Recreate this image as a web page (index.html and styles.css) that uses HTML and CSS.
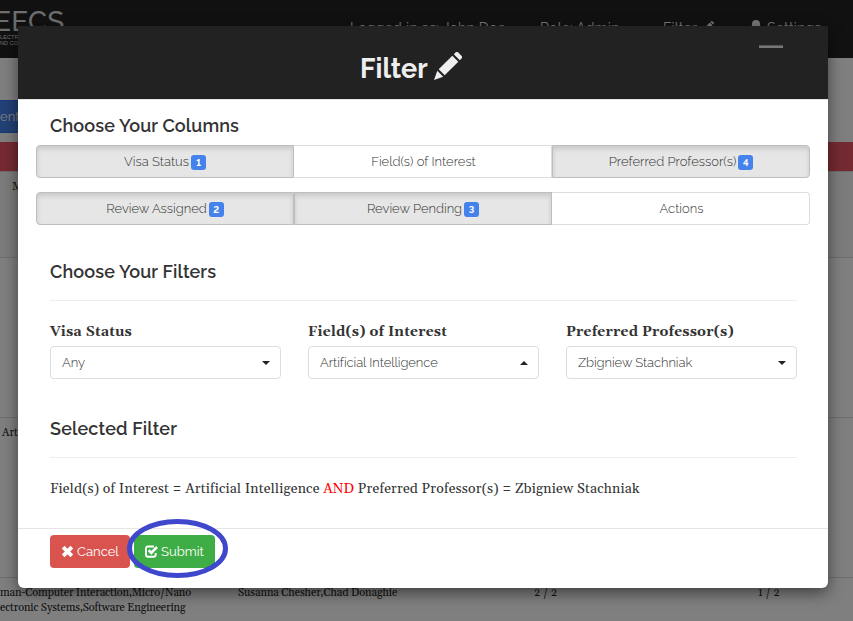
FILE: index.html
```html
<!DOCTYPE html>
<html lang="en">
<head>
<meta charset="utf-8">
<title>Filter</title>
<link rel="stylesheet" href="styles.css">
</head>
<body>
<svg class="defs" aria-hidden="true">
  <symbol id="pencil" viewBox="0 0 28 28"><path d="M0 28 3.3 18.8 9.2 24.7ZM4.7 17.3 18.3 3.7 24.3 9.7 10.7 23.3ZM19.8 2.2 22 0Q23 -.6 24 .3L27.7 4Q28.6 5 28 6L25.8 8.2Z"/></symbol>
</svg>
<div class="page">
  <nav class="navbar">
    <div class="logo"><span class="logo-name">EECS</span><span class="logo-sub">LECTRICAL ENGINEERING<br>ND COMPUTER SCIENCE</span></div>
    <span class="nav-item nav-user">Logged in as: John Doe</span>
    <span class="nav-item nav-role">Role: Admin</span>
    <span class="nav-item nav-filter">Filter <svg class="nav-pencil"><use href="#pencil"/></svg></span>
    <span class="nav-item nav-settings"><svg class="nav-dot" viewBox="0 0 10 14"><circle cx="5" cy="4" r="4"/><path d="M1 4H9L10 14H0Z"/></svg>Settings</span>
  </nav>
  <div class="toolbar"><span class="tool">ent</span></div>
  <div class="table-head"></div>
  <div class="row row-first"><span class="cell-m">Machine</span></div>
  <div class="row row-mid"></div>
  <div class="row row-mid"><span class="cell-a">Artificial</span></div>
  <div class="row row-last"><span class="c1">man-Computer Interaction,Micro/Nano<br>ectronic Systems,Software Engineering</span><span class="c2">Susanna Chesher,Chad Donaghie</span><span class="c3">2 / 2</span><span class="c4">1 / 2</span></div>
</div>
<div class="backdrop"></div>
<section class="modal">
  <header class="modal-header"><h1>Filter</h1><svg class="title-pencil"><use href="#pencil"/></svg><i class="minimize"></i></header>
  <main class="modal-body">
    <h2>Choose Your Columns</h2>
    <div class="group">
      <button class="active"><span>Visa Status</span><b>1</b></button><button><span>Field(s) of Interest</span></button><button class="active"><span>Preferred Professor(s)</span><b>4</b></button>
    </div>
    <div class="group">
      <button class="active"><span>Review Assigned</span><b>2</b></button><button class="active"><span>Review Pending</span><b>3</b></button><button><span>Actions</span></button>
    </div>
    <h2 class="filters-title">Choose Your Filters</h2>
    <hr>
    <div class="fields">
      <div class="field"><label>Visa Status</label><div class="select"><span>Any</span><i class="caret"></i></div></div>
      <div class="field"><label>Field(s) of Interest</label><div class="select"><span>Artificial Intelligence</span><i class="caret up"></i></div></div>
      <div class="field"><label>Preferred Professor(s)</label><div class="select"><span>Zbigniew Stachniak</span><i class="caret"></i></div></div>
    </div>
    <h2 class="selected-title">Selected Filter</h2>
    <hr>
    <p class="summary">Field(s) of Interest = Artificial Intelligence <em>AND</em> Preferred Professor(s) = Zbigniew Stachniak</p>
  </main>
  <footer class="modal-footer">
    <button class="cancel"><svg viewBox="0 0 12 12"><path d="M2 2 10 10M10 2 2 10" fill="none" stroke="#fff" stroke-width="3.6"/></svg><span>Cancel</span></button>
    <button class="submit"><svg viewBox="0 0 13 13"><path d="M9 1.5H3Q1 1.5 1 3.5V9.5Q1 11.8 3 11.8H8.5Q10.7 11.8 10.7 9.5V8" fill="none" stroke="#fff" stroke-width="1.9"/><path d="M3.7 5.3 6.3 7.8 12 2" fill="none" stroke="#fff" stroke-width="2.6"/></svg><span>Submit</span></button>
    <svg class="ring" viewBox="0 0 102 60"><ellipse cx="50.5" cy="29.5" rx="48" ry="27"/></svg>
  </footer>
</section>
</body>
</html>
```
FILE: styles.css
```css
* { box-sizing: border-box; }
body { margin: 0; width: 853px; height: 621px; overflow: hidden; position: relative; background: #fff; color: #333; font-family: Raleway, Lato, sans-serif; }
.defs { position: absolute; width: 0; height: 0; }
.page { height: 621px; overflow: hidden; font: 11px/15px Georgia, Gelasio, "Liberation Serif", serif; }
.navbar { height: 58px; background: #222; color: #eee; display: flex; font: 14px/20px Raleway, Lato, sans-serif; }
.logo { width: 350px; padding-top: 10px; }
.logo-name { display: block; margin-left: -6px; height: 24px; font: 500 28px/24px Raleway, Lato, sans-serif; letter-spacing: .2px; color: #ddd; }
.logo-sub { display: block; font: 5.5px/6px "Liberation Sans", sans-serif; letter-spacing: .1px; color: #ddd; }
.nav-item { padding-top: 18px; white-space: nowrap; }
.nav-user { width: 190px; letter-spacing: .25px; }
.nav-role { width: 123px; letter-spacing: .2px; }
.nav-filter { width: 88px; letter-spacing: .2px; }
.nav-pencil { width: 12px; height: 12px; fill: #eee; margin-left: 2px; }
.nav-settings { letter-spacing: .2px; }
.nav-dot { width: 10px; height: 14px; fill: #eee; margin-right: 6px; vertical-align: -1px; }
.toolbar { height: 84px; padding-top: 42px; }
.tool { display: block; width: 70px; height: 33px; background: #4582ec; border: 1px solid #2e72ea; border-left: 0; color: #fff; font: 13px/31px Raleway, Lato, sans-serif; }
.table-head { height: 29px; background: #eb5565; }
.row { border-top: 1px solid #ddd; color: #222; }
.row-first { height: 86px; padding: 8px 0 0 12px; background: #f9f9f9; }
.row-mid { height: 160px; }
.cell-a { display: block; padding: 8px 0 0 2px; }
.row-last { height: 44px; padding-top: 8px; display: flex; background: #fff; white-space: nowrap; }
.c1 { width: 238px; letter-spacing: -.12px; }
.c2 { width: 296px; letter-spacing: -.08px; }
.c3 { width: 224px; letter-spacing: .1px; }
.c4 { letter-spacing: .1px; }
.backdrop { position: absolute; inset: 0; background: rgba(0,0,0,.5); }
.modal { position: absolute; left: 18px; top: 26px; width: 810px; height: 562px; background: #fff; border-radius: 0 0 6px 6px; box-shadow: 0 5px 15px rgba(0,0,0,.5); }
.modal-header { height: 73px; background: #222; box-shadow: 0 1px #e5e5e5; display: flex; position: relative; padding: 26px 0 0 342px; }
h1 { margin: 1px 0 0; width: 74px; color: #eee; font: 700 27px/32px Raleway, Lato, sans-serif; white-space: nowrap; }
.title-pencil { width: 28px; height: 28px; fill: #eee; }
.minimize { position: absolute; left: 741px; top: 19px; width: 24px; height: 3px; background: #777; border-top: 1px solid #555; }
.modal-body { height: 429px; padding: 15px 31px 0 32px; }
h2 { margin: 0; font: 600 18px/24px Raleway, Lato, sans-serif; letter-spacing: .13px; white-space: nowrap; }
button { font-family: Raleway, Lato, sans-serif; font-size: 13px; padding: 0; }
.group { display: grid; grid-template-columns: repeat(3, 258px); margin: 7px -14px 0; height: 33px; }
.group + .group { margin-top: 14px; }
.group button { display: flex; align-items: center; justify-content: center; gap: 3px; height: 33px; padding-left: 2px; border: 1px solid #ddd; background: #fff; color: #333; font-weight: 300; white-space: nowrap; }
.group button:first-child { border-radius: 4px 0 0 4px; }
.group button:last-child { border-radius: 0 4px 4px 0; }
.group button:not(:first-child):not(.active) { border-left: 0; }
.group .active { padding-left: 0; gap: 2px; background: #e6e6e6; border-color: #bebebe; box-shadow: inset 0 3px 5px rgba(0,0,0,.125); }
.group b { width: 15px; height: 15px; border-radius: 3px; background: #4582ec; color: #fff; font: 700 9.5px/15px Raleway, sans-serif; font-feature-settings: "lnum"; position: relative; top: 1px; }
.filters-title { margin-top: 35px; }
hr { margin: 16px 0 0; border: 0; border-top: 1px solid #eee; }
.fields { display: grid; grid-template-columns: repeat(3, 231px); gap: 27px; margin-top: 20px; }
label { display: block; height: 25px; padding-top: 1px; font: 700 14px/20px Georgia, Gelasio, "Liberation Serif", serif; letter-spacing: .19px; white-space: nowrap; }
.select { height: 33px; border: 1px solid #ddd; border-radius: 4px; display: flex; align-items: center; justify-content: space-between; padding: 0 10px 0 11px; font-size: 13px; font-weight: 300; letter-spacing: -.06px; }
.caret { border: 4px solid transparent; border-top-color: #222; border-bottom: 0; }
.caret.up { border-top: 0; border-bottom: 4px solid #222; }
.selected-title { margin-top: 38px; }
.summary { margin: 21px 0 0; font: 14px/20px Georgia, Gelasio, "Liberation Serif", serif; letter-spacing: .175px; white-space: nowrap; }
em { color: red; font-style: normal; }
.modal-footer { border-top: 1px solid #e5e5e5; padding: 6px 32px; display: flex; gap: 4px; position: relative; }
.modal-footer button { height: 33px; border: 0; border-radius: 4px; color: #fff; display: flex; align-items: center; justify-content: center; gap: 3px; }
.modal-footer button svg { width: 13px; height: 13px; }
.cancel { width: 80px; background: #d9534f; }
.submit { width: 81px; background: #3fad46; }
.ring { position: absolute; left: 109px; top: -10px; width: 102px; height: 60px; }
.ring ellipse { fill: none; stroke: #3f48cc; stroke-width: 5; }
```
